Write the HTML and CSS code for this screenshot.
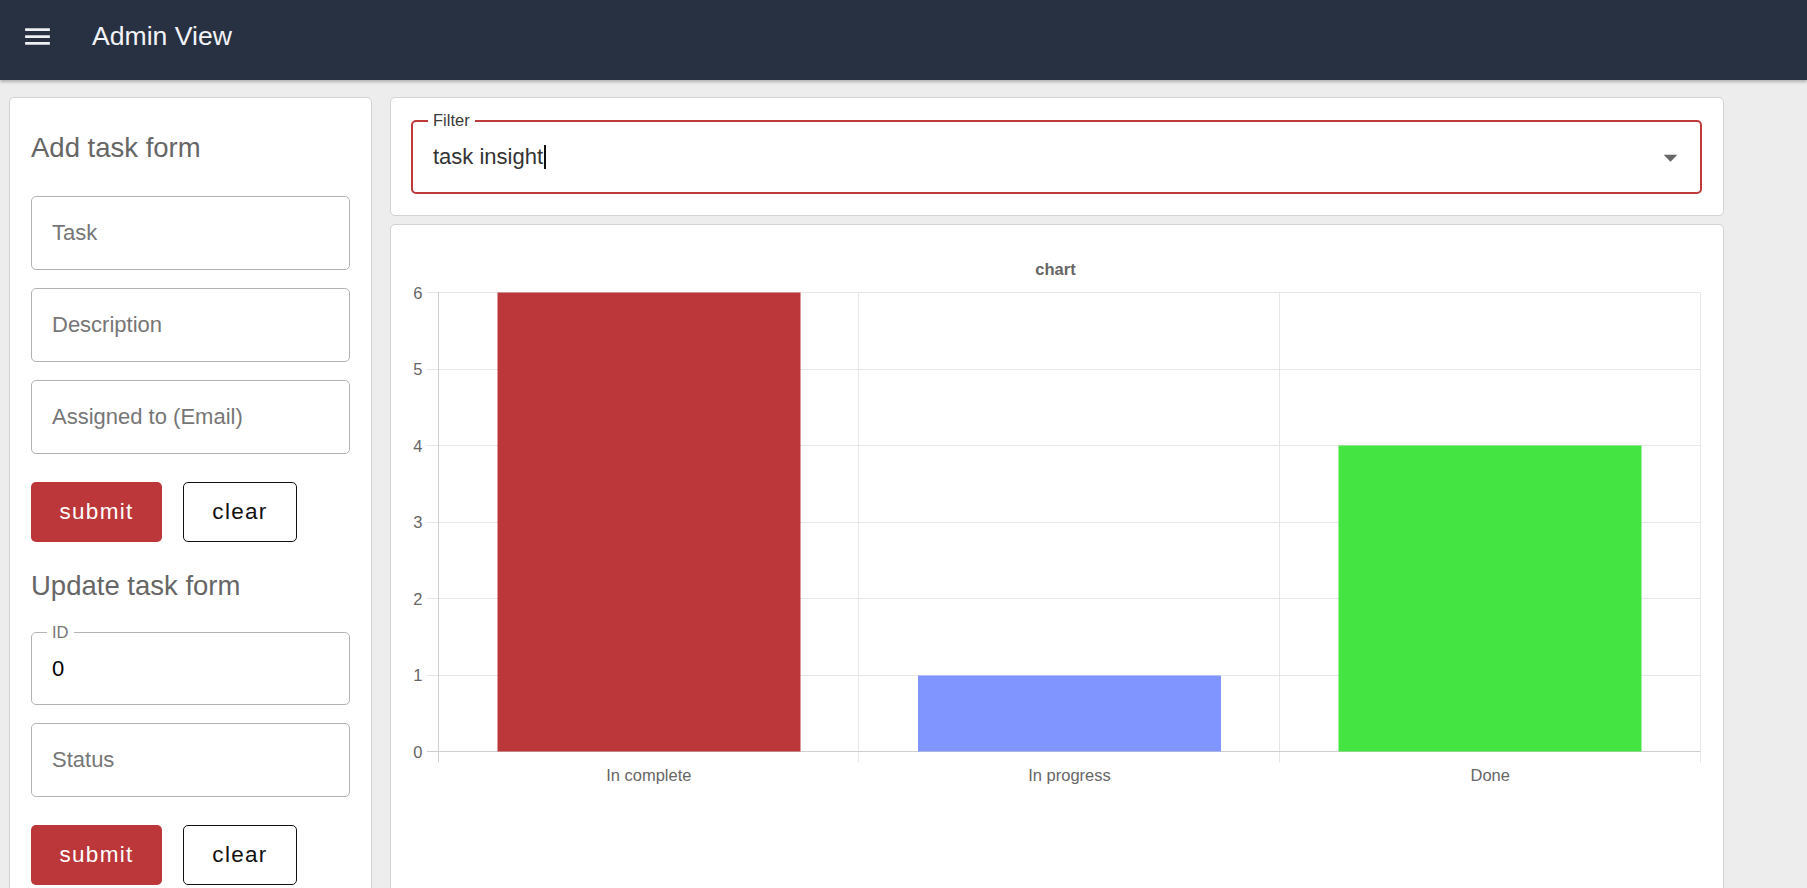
FILE: index.html
```html
<!DOCTYPE html>
<html lang="en">
<head>
<meta charset="utf-8">
<title>Admin View</title>
<link rel="stylesheet" href="styles.css">
</head>
<body>
<div class="page">
  <header class="appbar">
    <svg class="menu-icon" viewBox="0 0 24 24" aria-hidden="true"><path d="M3 18h18v-2H3v2zm0-5h18v-2H3v2zm0-7v2h18V6H3z"/></svg>
    <h1 class="appbar-title">Admin View</h1>
  </header>
  <main class="layout">
    <section class="card form-card">
      <h2 class="form-title">Add task form</h2>
      <div class="field"><span class="placeholder">Task</span></div>
      <div class="field"><span class="placeholder">Description</span></div>
      <div class="field"><span class="placeholder">Assigned to (Email)</span></div>
      <div class="actions">
        <button class="btn btn-primary">submit</button>
        <button class="btn btn-outline">clear</button>
      </div>
      <h2 class="form-title form-title-second">Update task form</h2>
      <div class="field field-labeled"><span class="field-label">ID</span><span class="value">0</span></div>
      <div class="field field-status"><span class="placeholder">Status</span></div>
      <div class="actions">
        <button class="btn btn-primary">submit</button>
        <button class="btn btn-outline">clear</button>
      </div>
    </section>
    <div class="content">
      <section class="card filter-card">
        <div class="select">
          <span class="select-label">Filter</span>
          <span class="select-value">task insight<span class="caret"></span></span>
          <svg class="select-arrow" viewBox="0 0 24 24" aria-hidden="true"><path d="M7 10l5 5 5-5z"/></svg>
        </div>
      </section>
      <section class="card chart-card">
        <svg class="chart" width="1331" height="680" viewBox="0 0 1331 680">
          <text class="chart-title" x="664.5" y="49.5" text-anchor="middle">chart</text>
          <g class="grid">
            <line x1="36" y1="67.5" x2="1309.5" y2="67.5"/>
            <line x1="36" y1="144.5" x2="1309.5" y2="144.5"/>
            <line x1="36" y1="220.5" x2="1309.5" y2="220.5"/>
            <line x1="36" y1="297.5" x2="1309.5" y2="297.5"/>
            <line x1="36" y1="373.5" x2="1309.5" y2="373.5"/>
            <line x1="36" y1="450.5" x2="1309.5" y2="450.5"/>
            <line x1="467.5" y1="67.5" x2="467.5" y2="537.5"/>
            <line x1="888.5" y1="67.5" x2="888.5" y2="537.5"/>
            <line x1="1309.5" y1="67.5" x2="1309.5" y2="537.5"/>
          </g>
          <g class="axis">
            <line x1="36" y1="526.5" x2="1309.5" y2="526.5"/>
            <line x1="47.5" y1="67.5" x2="47.5" y2="537.5"/>
          </g>
          <rect class="bar-red" x="106.5" y="67.5" width="303" height="459"/>
          <rect class="bar-blue" x="527" y="450.5" width="303" height="76"/>
          <rect class="bar-green" x="947.5" y="220.5" width="303" height="306"/>
          <g class="ticks-y" text-anchor="end">
            <text x="31.5" y="73.5">6</text>
            <text x="31.5" y="150">5</text>
            <text x="31.5" y="226.5">4</text>
            <text x="31.5" y="303">3</text>
            <text x="31.5" y="379.5">2</text>
            <text x="31.5" y="456">1</text>
            <text x="31.5" y="532.5">0</text>
          </g>
          <g class="ticks-x" text-anchor="middle">
            <text x="257.8" y="556">In complete</text>
            <text x="678.5" y="556">In progress</text>
            <text x="1099.2" y="556">Done</text>
          </g>
        </svg>
      </section>
    </div>
  </main>
</div>
</body>
</html>
```

FILE: styles.css
```css
* { box-sizing: border-box; }

html, body {
  margin: 0;
  padding: 0;
  height: 100%;
  overflow: hidden;
}

body {
  background: #ededed;
  font-family: "Liberation Sans", Arial, sans-serif;
  color: #333;
}

.page {
  height: 100vh;
  overflow: hidden;
}

/* App bar */
.appbar {
  height: 80px;
  background: #283142;
  display: flex;
  align-items: center;
  padding: 0 0 7px 21px;
  box-shadow: 0 2px 3px rgba(0, 0, 0, 0.25);
  position: relative;
  z-index: 1;
}

.menu-icon {
  width: 33px;
  height: 33px;
  fill: #eef0f4;
  flex: none;
}

.appbar-title {
  margin: 0 0 0 38px;
  font-size: 26.6px;
  font-weight: 400;
  color: #f2f3f6;
  line-height: 1;
}

/* Layout */
.layout {
  display: flex;
  align-items: flex-start;
  gap: 18px;
  padding: 17px 0 0 9px;
}

.card {
  background: #fff;
  border: 1px solid #d2d2d2;
  border-radius: 5px;
}

/* Left form card */
.form-card {
  width: 363px;
  flex: none;
  padding: 33px 21px 22px 21px;
}

.form-title {
  margin: 0;
  font-size: 27.5px;
  line-height: 33px;
  font-weight: 400;
  color: #666;
}

.form-title-second {
  margin-top: 27px;
}

.field {
  height: 74px;
  border: 1px solid #b3b3b3;
  border-radius: 5px;
  display: flex;
  align-items: center;
  padding-left: 20px;
  font-size: 22px;
  margin-top: 18px;
  position: relative;
}

.form-title + .field {
  margin-top: 32px;
}

.form-title-second + .field {
  margin-top: 30px;
  height: 73px;
}

.placeholder {
  color: #767676;
}

.value {
  color: #000;
}

.field-label {
  position: absolute;
  left: 15px;
  top: -10px;
  padding: 0 5px;
  background: #fff;
  font-size: 16.5px;
  line-height: 18px;
  color: #777;
}

.actions {
  display: flex;
  gap: 21px;
  margin-top: 28px;
}

.btn {
  height: 60px;
  border-radius: 5px;
  font-family: "Liberation Sans", Arial, sans-serif;
  font-size: 22.5px;
  letter-spacing: 1.3px;
  padding: 0;
  display: flex;
  align-items: center;
  justify-content: center;
  cursor: pointer;
}

.btn-primary {
  width: 131px;
  background: #bc373a;
  color: #fff;
  border: none;
}

.btn-outline {
  width: 114px;
  background: #fff;
  color: #111;
  border: 1px solid #111;
}

/* Right column */
.content {
  width: 1334px;
  flex: none;
  display: flex;
  flex-direction: column;
  gap: 8px;
}

.filter-card {
  padding: 22px 21px 21px 20px;
}

.select {
  height: 74px;
  border: 2px solid #c0393b;
  border-radius: 5px;
  display: flex;
  align-items: center;
  padding-left: 20px;
  position: relative;
}

.select-label {
  position: absolute;
  left: 15px;
  top: -11px;
  padding: 0 5px;
  background: #fff;
  font-size: 16.5px;
  line-height: 18px;
  color: #3a3a3a;
}

.select-value {
  flex: 1;
  font-size: 22px;
  color: #333;
  display: flex;
  align-items: center;
}

.caret {
  display: inline-block;
  width: 2px;
  height: 24px;
  background: #111;
  margin-left: 1px;
}

.select-arrow {
  width: 33px;
  height: 33px;
  fill: #666;
  margin-right: 13px;
  flex: none;
}

/* Chart card */
.chart-card {
  height: 700px;
  overflow: hidden;
}

.chart {
  display: block;
  font-family: "Liberation Sans", Arial, sans-serif;
}

.chart-title {
  font-size: 16.5px;
  font-weight: 700;
  fill: #666;
}

.grid line {
  stroke: #e6e6e6;
  stroke-width: 1;
}

.axis line {
  stroke: #cfcfcf;
  stroke-width: 1;
}

.bar-red { fill: #bc373a; }
.bar-blue { fill: #8095ff; }
.bar-green { fill: #44e442; }

.ticks-y text,
.ticks-x text {
  font-size: 16.5px;
  fill: #666;
}
```
